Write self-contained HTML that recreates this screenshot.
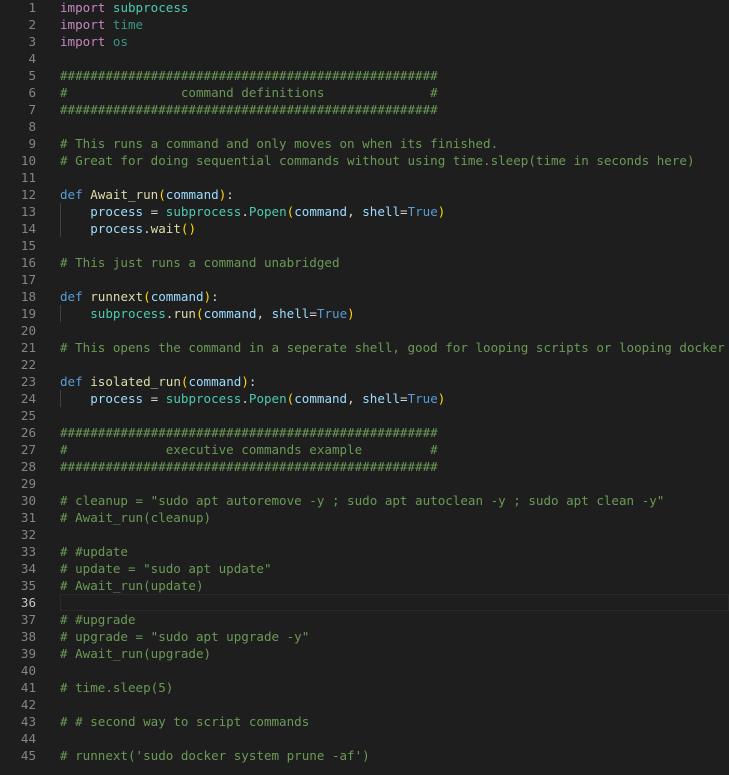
<!DOCTYPE html><html><head><style>
body{margin:0;background:#1e1e1e;width:729px;height:775px;overflow:hidden;font-family:"DejaVu Sans Mono","Liberation Mono",monospace;font-size:12.56px;}
.w{position:absolute;top:-1.5px;left:0;right:0}
.l{height:17px;line-height:17px;position:relative;white-space:pre;}
.n{position:absolute;left:0;width:36px;text-align:right;color:#858585}
.c{position:absolute;left:60px;color:#d4d4d4}
.cur .n{color:#c6c6c6}
.cur::after{content:"";position:absolute;left:60px;right:0;top:0;height:15px;border:1px solid #282828}
.g::before{content:"";position:absolute;left:60px;top:0;height:17px;border-left:1px solid #404040}
.k{color:#c586c0}.m{color:#4ec9b0}.u{color:#3a9585}.cm{color:#6a9955}.d{color:#569cd6}.f{color:#dcdcaa}.v{color:#9cdcfe}.p{color:#ffd700}
</style></head><body><div class="w">
<div class="l"><span class="n">1</span><span class="c"><span class="k">import</span> <span class="m">subprocess</span></span></div>
<div class="l"><span class="n">2</span><span class="c"><span class="k">import</span> <span class="u">time</span></span></div>
<div class="l"><span class="n">3</span><span class="c"><span class="k">import</span> <span class="u">os</span></span></div>
<div class="l"><span class="n">4</span></div>
<div class="l"><span class="n">5</span><span class="c cm">##################################################</span></div>
<div class="l"><span class="n">6</span><span class="c cm">#               command definitions              #</span></div>
<div class="l"><span class="n">7</span><span class="c cm">##################################################</span></div>
<div class="l"><span class="n">8</span></div>
<div class="l"><span class="n">9</span><span class="c cm"># This runs a command and only moves on when its finished.</span></div>
<div class="l"><span class="n">10</span><span class="c cm"># Great for doing sequential commands without using time.sleep(time in seconds here)</span></div>
<div class="l"><span class="n">11</span></div>
<div class="l"><span class="n">12</span><span class="c"><span class="d">def</span> <span class="f">Await_run</span><span class="p">(</span><span class="v">command</span><span class="p">)</span>:</span></div>
<div class="l g"><span class="n">13</span><span class="c">    <span class="v">process</span> = <span class="m">subprocess</span>.<span class="m">Popen</span><span class="p">(</span><span class="v">command</span>, <span class="v">shell</span>=<span class="d">True</span><span class="p">)</span></span></div>
<div class="l g"><span class="n">14</span><span class="c">    <span class="v">process</span>.<span class="f">wait</span><span class="p">()</span></span></div>
<div class="l"><span class="n">15</span></div>
<div class="l"><span class="n">16</span><span class="c cm"># This just runs a command unabridged</span></div>
<div class="l"><span class="n">17</span></div>
<div class="l"><span class="n">18</span><span class="c"><span class="d">def</span> <span class="f">runnext</span><span class="p">(</span><span class="v">command</span><span class="p">)</span>:</span></div>
<div class="l g"><span class="n">19</span><span class="c">    <span class="m">subprocess</span>.<span class="f">run</span><span class="p">(</span><span class="v">command</span>, <span class="v">shell</span>=<span class="d">True</span><span class="p">)</span></span></div>
<div class="l"><span class="n">20</span></div>
<div class="l"><span class="n">21</span><span class="c cm"># This opens the command in a seperate shell, good for looping scripts or looping docker</span></div>
<div class="l"><span class="n">22</span></div>
<div class="l"><span class="n">23</span><span class="c"><span class="d">def</span> <span class="f">isolated_run</span><span class="p">(</span><span class="v">command</span><span class="p">)</span>:</span></div>
<div class="l g"><span class="n">24</span><span class="c">    <span class="v">process</span> = <span class="m">subprocess</span>.<span class="m">Popen</span><span class="p">(</span><span class="v">command</span>, <span class="v">shell</span>=<span class="d">True</span><span class="p">)</span></span></div>
<div class="l"><span class="n">25</span></div>
<div class="l"><span class="n">26</span><span class="c cm">##################################################</span></div>
<div class="l"><span class="n">27</span><span class="c cm">#             executive commands example         #</span></div>
<div class="l"><span class="n">28</span><span class="c cm">##################################################</span></div>
<div class="l"><span class="n">29</span></div>
<div class="l"><span class="n">30</span><span class="c cm"># cleanup = "sudo apt autoremove -y ; sudo apt autoclean -y ; sudo apt clean -y"</span></div>
<div class="l"><span class="n">31</span><span class="c cm"># Await_run(cleanup)</span></div>
<div class="l"><span class="n">32</span></div>
<div class="l"><span class="n">33</span><span class="c cm"># #update</span></div>
<div class="l"><span class="n">34</span><span class="c cm"># update = "sudo apt update"</span></div>
<div class="l"><span class="n">35</span><span class="c cm"># Await_run(update)</span></div>
<div class="l cur"><span class="n">36</span></div>
<div class="l"><span class="n">37</span><span class="c cm"># #upgrade</span></div>
<div class="l"><span class="n">38</span><span class="c cm"># upgrade = "sudo apt upgrade -y"</span></div>
<div class="l"><span class="n">39</span><span class="c cm"># Await_run(upgrade)</span></div>
<div class="l"><span class="n">40</span></div>
<div class="l"><span class="n">41</span><span class="c cm"># time.sleep(5)</span></div>
<div class="l"><span class="n">42</span></div>
<div class="l"><span class="n">43</span><span class="c cm"># # second way to script commands</span></div>
<div class="l"><span class="n">44</span></div>
<div class="l"><span class="n">45</span><span class="c cm"># runnext('sudo docker system prune -af')</span></div>
</div></body></html>
